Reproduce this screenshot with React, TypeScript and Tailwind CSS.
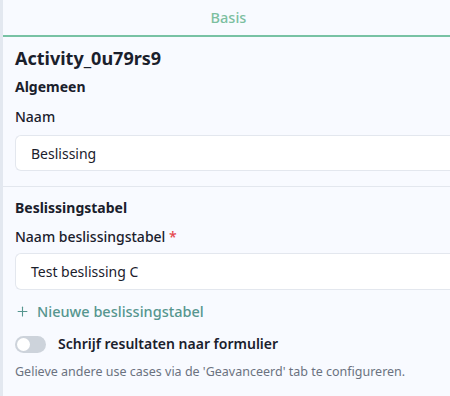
import { Plus } from "lucide-react";

export default function App() {
  return (
    <div
      className="w-[450px] h-[396px] bg-[#f8faff] border-l-[3px] border-[#e3e8f0] overflow-hidden text-[#1a202c]"
      style={{ fontFamily: '"Noto Sans", "Open Sans", sans-serif' }}
    >
      {/* Tabs */}
      <div className="h-[37px] border-b-2 border-[#78c2a4] flex items-center justify-center">
        <span className="text-[14.5px] text-[#7cbf9f] font-medium ml-[4px]">Basis</span>
      </div>

      <div className="pl-[12px]">
        <h1 className="text-[18px] font-bold mt-[8px] leading-[26px]">Activity_0u79rs9</h1>
        <h2 className="text-[14px] font-bold mt-[6px] leading-[20px]">Algemeen</h2>
        <label className="block text-[14px] font-medium mt-[10px] leading-[20px]">Naam</label>
        <div className="mt-[8px] h-[36px] bg-white border border-[#e3e7ee] border-r-0 rounded-l-[6px] flex items-center pl-[15px] text-[14px]">
          Beslissing
        </div>
      </div>

      <div className="mt-[15px] border-t border-[#e3e7ee] pl-[12px]">
        <h2 className="text-[14px] font-bold mt-[11px] leading-[20px]">Beslissingstabel</h2>
        <label className="block text-[14px] font-medium mt-[9px] leading-[20px]">
          Naam beslissingstabel <span className="text-[#e5484d]">*</span>
        </label>
        <div className="mt-[6px] h-[37px] bg-white border border-[#e3e7ee] border-r-0 rounded-l-[6px] flex items-center pl-[15px] text-[14px]">
          Test beslissing C
        </div>
        <button className="mt-[11px] flex items-center gap-[7px] text-[14.5px] font-medium text-[#56968f] leading-[20px]">
          <Plus className="w-[15px] h-[15px]" strokeWidth={1.75} />
          Nieuwe beslissingstabel
        </button>
        <div className="mt-[13px] flex items-center gap-[12px]">
          <div className="w-[31px] h-[17px] rounded-full bg-[#cdd3db] p-[2px] flex items-center">
            <div className="w-[13px] h-[13px] rounded-full bg-white" />
          </div>
          <span className="text-[14px] font-semibold leading-[20px]">Schrijf resultaten naar formulier</span>
        </div>
        <p className="mt-[9px] text-[12.5px] text-[#6b7280] leading-[18px]">
          Gelieve andere use cases via de 'Geavanceerd' tab te configureren.
        </p>
      </div>
    </div>
  );
}
